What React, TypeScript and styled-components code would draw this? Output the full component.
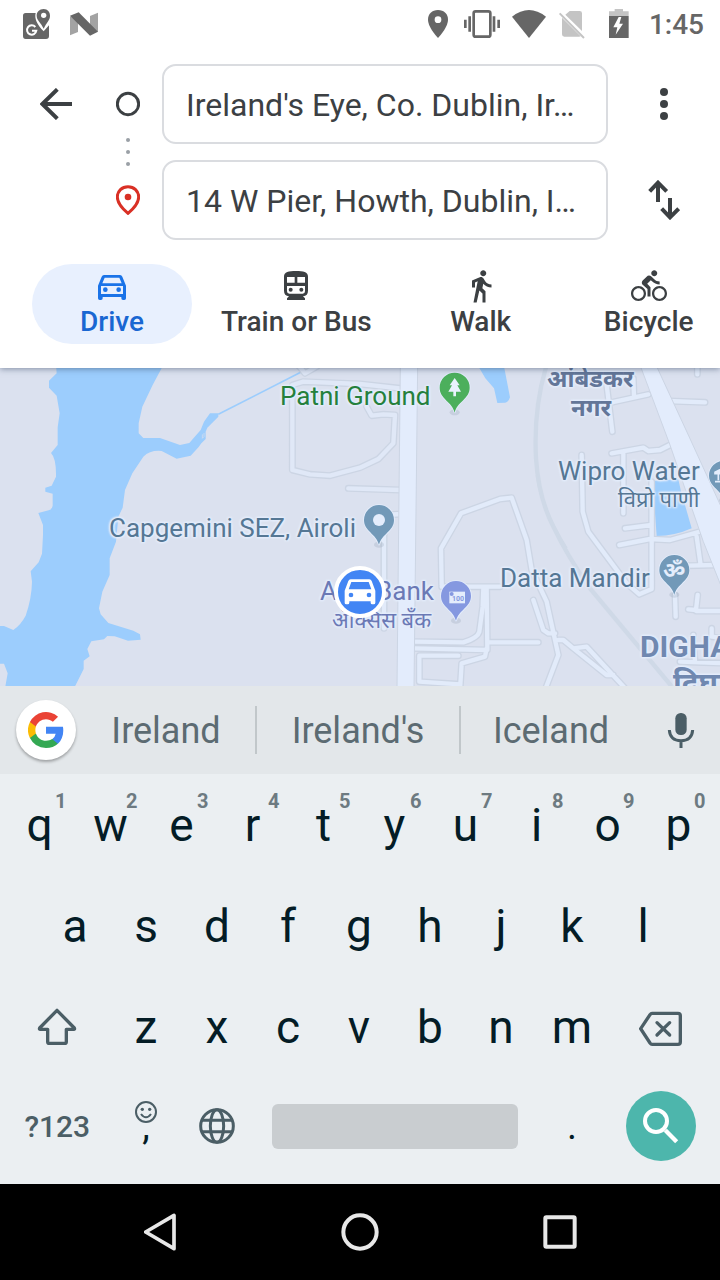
import React, { useState } from "react";
import styled, { createGlobalStyle } from "styled-components";
import { MdDirectionsBike, MdDirectionsWalk } from "react-icons/md";

const ink = "#3c4043";
const keyInk = "#041c26";
const keyMuted = "#4b5e66";

const GlobalStyle = createGlobalStyle`
  * { box-sizing: border-box; }
  body { margin: 0; font-family: Roboto, "Noto Sans", sans-serif; background: #fff; }
  button { border: 0; padding: 0; background: none; font: inherit; color: inherit; cursor: pointer; }
  svg { display: block; flex: none; }
`;

const Screen = styled.div`
  display: flex;
  flex-direction: column;
  min-height: 100vh;
  overflow: hidden;
`;

const StatusBar = styled.div`
  display: flex;
  align-items: center;
  justify-content: space-between;
  height: 48px;
  padding: 0 16px 0 23px;
  color: #666;
`;

const StatusGroup = styled.div<{ $gap: number }>`
  display: flex;
  align-items: center;
  gap: ${(p) => p.$gap}px;
`;

const Clock = styled.time`
  font-size: 28px;
  line-height: 32px;
  font-weight: 500;
  padding-top: 2px;
`;

const Header = styled.header`
  position: relative;
  z-index: 2;
  background: #fff;
  box-shadow: 0 1px 6px rgba(40, 60, 90, 0.5);
`;

const Directions = styled.form`
  display: grid;
  grid-template-columns: 112px 32px 1fr 112px;
  grid-template-rows: 80px 80px;
  gap: 16px 0;
  padding-top: 16px;
`;

const IconButton = styled.button`
  display: flex;
  align-items: center;
  justify-content: center;
  grid-column: ${(p: { $col: number }) => p.$col};
`;

const Rail = styled.div`
  grid-column: 2;
  grid-row: 1 / 3;
  display: flex;
  flex-direction: column;
  align-items: center;
  justify-content: space-between;
  padding: 25px 0;
`;

const Place = styled.input`
  grid-column: 3;
  width: auto;
  min-width: 0;
  margin-left: 18px;
  padding: 2px 22px 0;
  border: 2px solid #dadce0;
  border-radius: 14px;
  outline: none;
  font: 400 32px/40px Roboto, sans-serif;
  color: ${ink};
  background: #fff;
  text-overflow: ellipsis;
`;

const Modes = styled.nav`
  display: flex;
  gap: 8px;
  padding: 24px 0 24px 32px;
  overflow: hidden;
`;

const Mode = styled.button<{ $active: boolean }>`
  display: flex;
  flex: none;
  flex-direction: column;
  align-items: center;
  height: 80px;
  min-width: 160px;
  padding: 4px 21px;
  border-radius: 40px;
  color: ${(p) => (p.$active ? "#1967d2" : ink)};
  background: ${(p) => (p.$active ? "#e8f0fe" : "transparent")};
  font: 500 28px/36px "Google Sans", Roboto, sans-serif;
  white-space: nowrap;
`;

const MapView = styled.main`
  position: relative;
  flex: 1 0 318px;
  overflow: hidden;
  background: #dbe1ef;
`;

const MapLabel = styled.span<{ $x: number; $y: number; $color: string; $size?: number; $bold?: boolean }>`
  position: absolute;
  left: ${(p) => p.$x}px;
  top: ${(p) => p.$y}px;
  color: ${(p) => p.$color};
  font-family: Roboto, "Noto Sans", "Noto Sans Devanagari", sans-serif;
  font-size: ${(p) => p.$size ?? 26}px;
  font-weight: ${(p) => (p.$bold ? 700 : 400)};
  line-height: 32px;
  white-space: nowrap;
  text-shadow: 0 0 3px #e4edfc, 1px 1px 2px #e4edfc, -1px -1px 2px #e4edfc, 1px -1px 2px #e4edfc, -1px 1px 2px #e4edfc;
`;

const CarMarker = styled.div`
  position: absolute;
  left: 334px;
  top: 198px;
  display: flex;
  align-items: center;
  justify-content: center;
  width: 52px;
  height: 52px;
  border: 4px solid #fff;
  border-radius: 50%;
  background: #4285f4;
`;

const Suggestions = styled.div`
  display: grid;
  grid-template-columns: 77px 180fr 204fr 180fr 79px;
  align-items: center;
  height: 88px;
  background: #e3e7ea;
  color: #5c6b72;
`;

const GoogleButton = styled.button`
  display: flex;
  align-items: center;
  justify-content: center;
  width: 60px;
  height: 60px;
  margin-left: 16px;
  border-radius: 50%;
  background: #fff;
  box-shadow: 0 2px 3px rgba(0, 0, 0, 0.3);
`;

const Suggestion = styled.button<{ $divider?: boolean }>`
  height: 48px;
  padding-top: 3px;
  border-right: ${(p) => (p.$divider ? "2px solid #c1c7ca" : "0")};
  font-size: 36px;
  line-height: 45px;
`;

const MicButton = styled.button`
  display: flex;
  justify-content: center;
`;

const Keyboard = styled.div`
  padding: 0 6px 9px 4px;
  background: #ebeff2;
  color: ${keyInk};
`;

const KeyRow = styled.div<{ $inset?: boolean; $height?: number }>`
  display: flex;
  height: ${(p) => p.$height ?? 101}px;
  padding: 0 ${(p) => (p.$inset ? "5%" : "0")};
`;

const Key = styled.button<{ $span?: number; $kind?: "label" | "mark" }>`
  position: relative;
  display: flex;
  align-items: center;
  justify-content: center;
  flex: ${(p) => p.$span ?? 1} 1 0;
  min-width: 0;
  font-size: ${(p) => (p.$kind === "label" ? 30 : p.$kind === "mark" ? 38 : 46)}px;
  font-weight: ${(p) => (p.$kind === "label" ? 500 : 400)};
  color: ${(p) => (p.$kind === "label" ? keyMuted : keyInk)};
`;

const Hint = styled.sup`
  position: absolute;
  left: 51px;
  top: 17px;
  font-size: 20px;
  line-height: 20px;
  font-weight: 700;
  color: #6d7a81;
`;

const EmojiHint = styled.span`
  position: absolute;
  top: 24px;
`;

const SpaceBar = styled.span`
  flex: 1;
  height: 45px;
  margin: 0 19px;
  border-radius: 6px;
  background: #c9cdd0;
`;

const SearchDisc = styled.span`
  display: flex;
  align-items: center;
  justify-content: center;
  width: 70px;
  height: 70px;
  border-radius: 50%;
  background: #4db6ac;
`;

const NavBar = styled.nav`
  display: grid;
  grid-template-columns: repeat(3, 1fr);
  height: 96px;
  padding: 0 60px;
  background: #000;
`;

const NavButton = styled.button`
  display: flex;
  align-items: center;
  justify-content: center;
`;

/* Icons are drawn on a grid of three units to the pixel. */
type GlyphProps = { box: string; children: React.ReactNode };
const Glyph = ({ box, children }: GlyphProps) => {
  const [, , w, h] = box.split(" ").map(Number);
  return (
    <svg width={w / 3} height={h / 3} viewBox={box} fill="none" aria-hidden="true">
      {children}
    </svg>
  );
};

const MapsAppIcon = () => (
  <Glyph box="69 18 84 96">
    <path d="M77 33H107C103 50 110 66 131 88L147 70V102Q147 111 138 111H77Q69 111 69 102V41Q69 33 77 33Z" fill="#666" />
    <path d="M131 21C118 21 110 30 110 41C110 55 123 62 131 80C139 62 150 55 150 41C150 30 143 21 131 21Z" fill="#666" />
    <circle cx="131" cy="40" r="8" fill="#fff" />
    <path d="M106 75A14 14 0 1 0 109 86H96" stroke="#fff" strokeWidth="6" />
  </Glyph>
);

const NougatIcon = () => (
  <Glyph box="210 33 84 78">
    <path d="M210 49L234 60V96L210 106Z" fill="#a3a3a3" />
    <path d="M294 38L270 48V80L294 96Z" fill="#a3a3a3" />
    <path d="M210 47L236 37L294 95L270 107Z" fill="#666" />
  </Glyph>
);

const StatusIcons = () => (
  <>
    <Glyph box="207 24 72 96">
      <path d="M237 30C219 30 207 42 207 59C207 79 228 104 237 114C246 104 267 79 267 59C267 42 255 30 237 30Z" fill="#666" />
      <circle cx="237" cy="59" r="10" fill="#fff" />
    </Glyph>
    <Glyph box="315 24 108 96">
      <rect x="344" y="34" width="50" height="76" rx="6" stroke="#666" strokeWidth="8" />
      <path d="M332 49V95M405 49V95M319 59V84M419 59V84" stroke="#666" strokeWidth="8" />
    </Glyph>
    <Glyph box="459 24 102 96">
      <path d="M459 50Q510 10 561 50L510 114Z" fill="#666" />
    </Glyph>
    <Glyph box="597 24 117 96">
      <path d="M632 33H662Q669 33 669 40V93L619 44ZM609 53L665 109Q664 110 660 110H616Q609 110 609 103Z" fill="#c4c4c4" />
      <path d="M602 40L675 114" stroke="#c4c4c4" strokeWidth="6" />
    </Glyph>
    <Glyph box="750 24 84 96">
      <path d="M767 27H792V34H809V48H750V34H767Z" fill="#c4c4c4" />
      <path d="M750 48H809V114H750Z" fill="#666" />
      <path d="M779 51L763 82H775L770 104L792 71H781L787 51Z" fill="#fff" />
    </Glyph>
  </>
);

const CarIcon = () => (
  <Glyph box="282 54 108 108">
    <path
      fillRule="evenodd"
      fill="#1a73e8"
      d="M312 75H360Q365 75 367 80L378 107V145Q378 150 373 150H369Q364 150 364 145V141H308V145Q308 150 303 150H299Q294 150 294 145V107L305 80Q307 75 312 75ZM314 83L307 100H365L358 83ZM303 108V132H369V108Z"
    />
    <circle cx="316" cy="119" r="7" fill="#1a73e8" />
    <circle cx="356" cy="119" r="7" fill="#1a73e8" />
  </Glyph>
);

const TrainIcon = () => (
  <Glyph box="834 54 108 108">
    <path
      fillRule="evenodd"
      fill={ink}
      d="M888 63C910 63 924 66 924 80V122Q924 137 909 139L915 145V150H861V145L867 139Q852 137 852 122V80C852 66 866 63 888 63ZM861 81V98H884V81ZM892 81V98H915V81ZM861 108V124Q861 131 868 131H908Q915 131 915 124V108Z"
    />
    <circle cx="872" cy="119" r="6" fill={ink} />
    <circle cx="904" cy="119" r="6" fill={ink} />
  </Glyph>
);

const GoogleLogo = () => (
  <svg width="36" height="36" viewBox="1 1 22 22" aria-hidden="true">
    <path fill="#4285f4" d="M22.56 12.25c0-.78-.07-1.53-.2-2.25H12v4.26h5.92a5.06 5.06 0 0 1-2.2 3.32v2.77h3.57c2.08-1.92 3.27-4.74 3.27-8.1z" />
    <path fill="#34a853" d="M12 23c2.97 0 5.46-.98 7.28-2.66l-3.57-2.77c-.98.66-2.23 1.06-3.71 1.06-2.86 0-5.29-1.93-6.16-4.53H2.18v2.84A11 11 0 0 0 12 23z" />
    <path fill="#fbbc05" d="M5.84 14.09a6.6 6.6 0 0 1 0-4.18V7.07H2.18a11 11 0 0 0 0 9.86l3.66-2.84z" />
    <path fill="#ea4335" d="M12 5.38c1.62 0 3.06.56 4.21 1.64l3.15-3.15A11 11 0 0 0 2.18 7.07l3.66 2.84C6.71 7.31 9.14 5.38 12 5.38z" />
  </svg>
);

const westRoads =
  "M1200 70L1080 57L910 50L877 60V315L930 328L990 332L1080 308L1135 282L1180 235L1185 150L1150 148L1115 152L1100 125M1045 370L1200 375M890 -5L915 25L950 5";
const eastRoads = [
  "M125 447L72 450V790",
  "M245 660L243 550L303 445L420 402L455 398L500 525L515 615L560 710L595 870L555 975",
  "M245 665H420M370 670L368 725L358 800Q354 818 310 832L162 830M380 670L382 855L162 850M385 832H535",
  "M380 850L375 875L305 895L300 975M295 872H178V950L300 958",
  "M520 705L550 795L565 805H585M595 825H610L640 850L680 845L800 975M640 850L740 930H760",
  "M665 270L668 440L685 500L800 655L838 688L875 672V350",
  "M755 265L850 248L865 258L900 255L930 240M790 265V445M795 490L875 480M778 540L870 522L930 525L1020 500",
  "M1010 515L1022 600M985 602L1065 600M945 690L947 755M1013 690L1008 735L985 733M1008 738H1100",
  "M740 60L757 200M755 112L865 88M820 40L822 95M925 108L1035 112M1012 0V28",
  "M960 890L1100 895M1000 810L1005 890M1055 790V815L1100 820",
].join("");

const MapPin = ({ x, y, color, children }: { x: number; y: number; color: string; children: React.ReactNode }) => (
  <g transform={`translate(${x} ${y})`}>
    <ellipse cx="0" cy="74" rx="15" ry="9" fill="#8d9bb0" opacity=".25" />
    <path
      d="M0 75C-7 42-45 34-45 0A45 45 0 0 1 45 0C45 34 7 42 0 75Z"
      fill={color}
      stroke="#e4edfc"
      strokeWidth="5"
      paintOrder="stroke"
    />
    {children}
  </g>
);

const MapDrawing = () => (
  <svg width="720" height="318" viewBox="0 9 2160 954" fill="none" aria-hidden="true">
    <path
      fill="#9ccdfd"
      d="M168 0L170 25L147 47V68L170 92L179 145L173 187V240L153 264Q169 280 168 335L155 362L136 368V380L158 386V422Q157 433 146 436L115 444L129 480V510L126 566L116 592L92 619L96 650Q95 700 77 752Q62 780 40 795L12 783H0V896H12L23 925L15 970H222L251 912V887L269 874L262 852L274 829L312 823L322 813L344 814L384 827L422 824L420 808L400 797L325 774L302 748L297 730L307 680L329 630V580L348 530L355 455L368 428L375 375L397 325L430 275Q450 255 485 258L530 281L572 272L596 246L604 235L617 222V200L622 188L655 155V145H630L612 170L602 195L568 234L540 240L480 219L430 219L416 205V175L427 125L458 60L490 0Z"
    />
    <path d="M655 148L902 22" stroke="#9ccdfd" strokeWidth="5" />
    <path d="M607 208V220L612 215V204" stroke="#dbe1ef" strokeWidth="2" />
    <g strokeLinejoin="round" strokeLinecap="round">
      <path d={westRoads} stroke="#ccd5e4" strokeWidth="21" />
      <path d={westRoads} stroke="#e0e8f7" strokeWidth="13" />
    </g>
    <g transform="translate(1080 0)">
      <path d="M358 9H433L450 97Q444 114 434 113L412 114L402 70L376 40ZM878 348L955 343L962 375L995 490Q944 513 890 513Z" fill="#9ccdfd" />
      <path d="M560 0Q520 130 528 280Q536 400 580 485Q620 570 690 670L940 970" stroke="#cfd9e7" strokeWidth="13" />
      <path d="M530 330Q545 430 620 550" stroke="#cfd9e7" strokeWidth="7" />
      <g strokeLinejoin="round" strokeLinecap="round">
        <path d={eastRoads} stroke="#ccd5e4" strokeWidth="21" />
        <path d={eastRoads} stroke="#e2ebfa" strokeWidth="13" />
      </g>
      <path d="M121 0L111 970H162L173 0Z" fill="#e3ecfc" stroke="#ccd5e4" strokeWidth="3" />
      <path d="M840 0L930 240L1030 530L1090 680V440L985 210L888 0Z" fill="#e3ecfc" stroke="#ccd5e4" strokeWidth="3" />
      <MapPin x={284} y={68} color="#4caf5c">
        <path d="M0-29L15-7H8L19 12H4V26H-4V12H-19L-8-7H-15Z" fill="#e9f2fd" />
      </MapPin>
      <MapPin x={57} y={465} color="#7299b8">
        <circle r="18" fill="#e4edfc" />
      </MapPin>
      <MapPin x={288} y={693} color="#8598e0">
        <rect x="-20" y="-13" width="47" height="35" fill="#e4edfc" />
        <circle cx="-13" cy="-6" r="6" fill="#8598e0" />
        <text x="6" y="14" textAnchor="middle" fontFamily="Roboto, sans-serif" fontSize="21" fontWeight="700" fill="#8598e0">100</text>
      </MapPin>
      <MapPin x={943} y={615} color="#7299b8">
        <text x="0" y="24" textAnchor="middle" fontFamily="'Noto Sans', 'Noto Sans Devanagari', sans-serif" fontSize="66" fontWeight="700" fill="#e4edfc">ॐ</text>
      </MapPin>
      <MapPin x={1092} y={332} color="#7299b8">
        <path d="M-27-10L0-24V-6H-27ZM-17-4V14M-27 18H0" fill="#e4edfc" stroke="#e4edfc" strokeWidth="5" />
      </MapPin>
    </g>
  </svg>
);

const modes = [
  { label: "Drive", icon: <CarIcon /> },
  { label: "Train or Bus", icon: <TrainIcon /> },
  { label: "Walk", icon: <MdDirectionsWalk size={36} /> },
  { label: "Bicycle", icon: <MdDirectionsBike size={36} /> },
];

const poi = "#557794";
const area = "#637698";
const bank = "#6b79b5";

export default function App() {
  const [mode, setMode] = useState("Drive");
  const [from, setFrom] = useState("Ireland's Eye, Co. Dublin, Ir…");
  const [to, setTo] = useState("14 W Pier, Howth, Dublin, I…");

  return (
    <Screen>
      <GlobalStyle />
      <Header>
        <StatusBar>
          <StatusGroup $gap={19}>
            <MapsAppIcon />
            <NougatIcon />
          </StatusGroup>
          <StatusGroup $gap={12}>
            <StatusIcons />
            <Clock>1:45</Clock>
          </StatusGroup>
        </StatusBar>
        <Directions onSubmit={(e) => e.preventDefault()}>
          <IconButton type="button" $col={1} aria-label="Back">
            <Glyph box="120 264 96 96">
              <path d="M216 312H127M172 268L127 312L172 356" stroke={ink} strokeWidth="12" />
            </Glyph>
          </IconButton>
          <Rail>
            <Glyph box="348 267 72 90">
              <circle cx="384" cy="312" r="32" stroke={ink} strokeWidth="9" />
            </Glyph>
            <Glyph box="372 414 24 84">
              <path d="M384 420h.1M384 456h.1M384 492h.1" stroke="#9aa0a6" strokeWidth="12" strokeLinecap="round" />
            </Glyph>
            <Glyph box="348 555 72 90">
              <path d="M384 560C366 560 352 573 352 591C352 610 366 625 384 640C402 625 416 610 416 591C416 573 402 560 384 560Z" stroke="#d93025" strokeWidth="9" />
              <circle cx="384" cy="591" r="10" fill="#d93025" />
            </Glyph>
          </Rail>
          <Place aria-label="Starting point" value={from} onChange={(e) => setFrom(e.target.value)} />
          <IconButton type="button" $col={4} aria-label="More options">
            <Glyph box="897 264 30 96">
              <circle cx="912" cy="276" r="12" fill={ink} />
              <circle cx="912" cy="312" r="12" fill={ink} />
              <circle cx="912" cy="348" r="12" fill={ink} />
            </Glyph>
          </IconButton>
          <Place aria-label="Destination" value={to} onChange={(e) => setTo(e.target.value)} />
          <IconButton
            type="button"
            $col={4}
            aria-label="Swap start and destination"
            onClick={() => {
              setFrom(to);
              setTo(from);
            }}
          >
            <Glyph box="864 540 96 120">
              <path d="M894 606V547M869 574L894 548L920 574M930 594V653M905 626L930 652L956 626" stroke={ink} strokeWidth="12" />
            </Glyph>
          </IconButton>
        </Directions>
        <Modes aria-label="Travel mode">
          {modes.map((m) => (
            <Mode key={m.label} type="button" $active={m.label === mode} aria-pressed={m.label === mode} onClick={() => setMode(m.label)}>
              {m.icon}
              {m.label}
            </Mode>
          ))}
        </Modes>
      </Header>

      <MapView>
        <MapDrawing />
        <MapLabel $x={280} $y={12} $color="#25803c">Patni Ground</MapLabel>
        <MapLabel $x={109} $y={144} $color={poi}>Capgemini SEZ, Airoli</MapLabel>
        <MapLabel $x={320} $y={207} $color={bank}>Axis Bank</MapLabel>
        <MapLabel $x={332} $y={237} $color={bank} $size={22}>ॲक्सिस बँक</MapLabel>
        <MapLabel $x={547} $y={-5} $color={area} $size={24} $bold>आंबेडकर</MapLabel>
        <MapLabel $x={571} $y={24} $color={area} $size={24} $bold>नगर</MapLabel>
        <MapLabel $x={558} $y={87} $color={poi}>Wipro Water</MapLabel>
        <MapLabel $x={618} $y={116} $color={poi} $size={22}>विप्रो पाणी</MapLabel>
        <MapLabel $x={500} $y={194} $color={poi}>Datta Mandir</MapLabel>
        <MapLabel $x={640} $y={263} $color="#7088b0" $size={30} $bold>DIGHA</MapLabel>
        <MapLabel $x={673} $y={300} $color="#7088b0" $size={30} $bold>दिघा</MapLabel>
        <CarMarker>
          <svg width="32" height="28" viewBox="0 0 96 84" aria-hidden="true">
            <path
              fillRule="evenodd"
              fill="#fff"
              d="M20 4H76Q81 4 83 9L94 38V74Q94 79 89 79H85Q80 79 80 74V70H16V74Q16 79 11 79H7Q2 79 2 74V38L13 9Q15 4 20 4ZM22 12L14 34H82L74 12ZM21 44A7 7 0 1 0 21 58A7 7 0 1 0 21 44ZM75 44A7 7 0 1 0 75 58A7 7 0 1 0 75 44Z"
            />
          </svg>
        </CarMarker>
      </MapView>

      <Suggestions>
        <GoogleButton type="button" aria-label="Google">
          <GoogleLogo />
        </GoogleButton>
        <Suggestion type="button" $divider>Ireland</Suggestion>
        <Suggestion type="button" $divider>Ireland's</Suggestion>
        <Suggestion type="button">Iceland</Suggestion>
        <MicButton type="button" aria-label="Voice input">
          <Glyph box="921 81 84 105">
            <rect x="946" y="81" width="34" height="66" rx="16" fill={keyMuted} />
            <path d="M928 132Q930 164 963 164Q996 164 998 132M963 164V186" stroke={keyMuted} strokeWidth="9" />
          </Glyph>
        </MicButton>
      </Suggestions>

      <Keyboard>
        <KeyRow>
          {[..."qwertyuiop"].map((c, i) => (
            <Key key={c} type="button">
              {c}
              <Hint>{(i + 1) % 10}</Hint>
            </Key>
          ))}
        </KeyRow>
        <KeyRow $inset>
          {[..."asdfghjkl"].map((c) => (
            <Key key={c} type="button">{c}</Key>
          ))}
        </KeyRow>
        <KeyRow>
          <Key type="button" $span={1.5} aria-label="Shift">
            <Glyph box="111 84 120 120">
              <path d="M171 94L119 147Q117 151 121 151H143V188Q143 193 148 193H194Q199 193 199 188V151H221Q225 151 223 147Z" stroke={keyMuted} strokeWidth="10" strokeLinejoin="round" />
            </Glyph>
          </Key>
          {[..."zxcvbnm"].map((c) => (
            <Key key={c} type="button">{c}</Key>
          ))}
          <Key type="button" $span={1.5} aria-label="Backspace">
            <Glyph box="840 84 132 120">
              <path d="M879 103H957Q964 103 964 110V189Q964 196 957 196H879Q876 196 873 192L845 149L873 107Q876 103 879 103Z" stroke={keyMuted} strokeWidth="10" />
              <path d="M894 131L932 168M932 131L894 168" stroke={keyMuted} strokeWidth="10" strokeLinecap="round" />
            </Glyph>
          </Key>
        </KeyRow>
        <KeyRow $height={98}>
          <Key type="button" $span={1.5} $kind="label">?123</Key>
          <Key type="button" $kind="mark">
            ,
            <EmojiHint>
              <Glyph box="402 363 66 66">
                <circle cx="435" cy="396" r="30" stroke={keyMuted} strokeWidth="6" />
                <circle cx="424" cy="388" r="5" fill={keyMuted} />
                <circle cx="446" cy="388" r="5" fill={keyMuted} />
                <path d="M420 402Q435 422 450 402" stroke={keyMuted} strokeWidth="6" />
              </Glyph>
            </EmojiHint>
          </Key>
          <Key type="button" aria-label="Switch language">
            <Glyph box="594 384 108 108">
              <circle cx="648" cy="438" r="49" stroke={keyMuted} strokeWidth="9" />
              <ellipse cx="648" cy="438" rx="20" ry="49" stroke={keyMuted} strokeWidth="9" />
              <path d="M602 421H694M602 455H694" stroke={keyMuted} strokeWidth="9" />
            </Glyph>
          </Key>
          <Key type="button" $span={4} aria-label="Space">
            <SpaceBar />
          </Key>
          <Key type="button" $kind="mark">.</Key>
          <Key type="button" $span={1.5} aria-label="Search">
            <SearchDisc>
              <Glyph box="852 384 108 108">
                <circle cx="891" cy="423" r="33" stroke="#fff" strokeWidth="12" />
                <path d="M919 451L953 485" stroke="#fff" strokeWidth="13" />
              </Glyph>
            </SearchDisc>
          </Key>
        </KeyRow>
      </Keyboard>

      <NavBar aria-label="System navigation">
        <NavButton type="button" aria-label="Back">
          <Glyph box="432 696 96 120">
            <path d="M522 706V806L437 756Z" stroke="#e8e8e8" strokeWidth="11" strokeLinejoin="round" />
          </Glyph>
        </NavButton>
        <NavButton type="button" aria-label="Home">
          <Glyph box="0 0 114 114">
            <circle cx="57" cy="57" r="50" stroke="#e8e8e8" strokeWidth="12" />
          </Glyph>
        </NavButton>
        <NavButton type="button" aria-label="Recent apps">
          <Glyph box="0 0 102 102">
            <rect x="7" y="7" width="88" height="88" rx="3" stroke="#e8e8e8" strokeWidth="12" />
          </Glyph>
        </NavButton>
      </NavBar>
    </Screen>
  );
}
